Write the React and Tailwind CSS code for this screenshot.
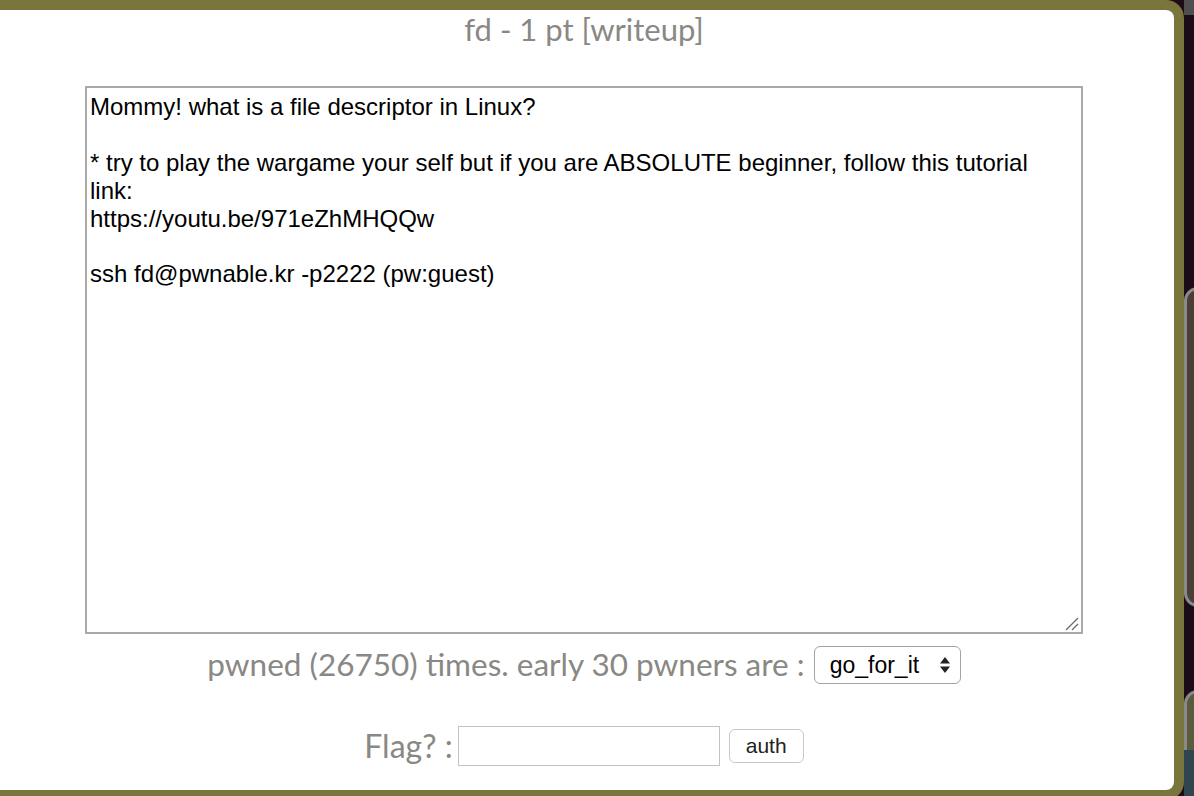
import React from "react";

const text = `Mommy! what is a file descriptor in Linux?

* try to play the wargame your self but if you are ABSOLUTE beginner, follow this tutorial
link:
https://youtu.be/971eZhMHQQw

ssh fd@pwnable.kr -p2222 (pw:guest)`;

export default function App() {
  return (
    <div className="flex h-[796px] w-[1194px] overflow-hidden bg-[#1b0c17]">
      <div className="h-[800px] w-[1184px] shrink-0 rounded-r-[18px] border-[10px] border-l-0 border-[#7a753c] bg-[#7a753c]">
        <div className="flex h-full flex-col items-center rounded-r-[8px] bg-white pr-[6px]">
          <h1 className="mt-[1px] text-[31px] leading-[1.2] text-[#8a8884]" style={{ fontFamily: "Lato, sans-serif" }}>
            fd - 1 pt [writeup]
          </h1>
          <div className="relative mt-[38px] h-[548px] w-[998px] border-2 border-[#a9a9a9]">
            <div
              className="h-full w-full overflow-hidden whitespace-pre-wrap px-[3px] pb-[2px] pt-[5px] text-[24px] leading-[1.16] text-black"
              style={{ fontFamily: "'Liberation Sans', Arial, sans-serif" }}
            >
              {text}
            </div>
            <svg className="absolute bottom-[1px] right-[2px]" width="16" height="16" viewBox="0 0 16 16">
              <path d="M3 15 L15 3" stroke="#6b6b6b" strokeWidth="1.3" />
              <path d="M9 15 L15 9" stroke="#6b6b6b" strokeWidth="1.3" />
            </svg>
          </div>
          <div className="mt-[12px] flex items-center gap-[9px]">
            <span className="text-[31.5px] leading-[1.2] text-[#8a8884]" style={{ fontFamily: "Lato, sans-serif" }}>
              pwned (26750) times. early 30 pwners are :
            </span>
            <div
              className="flex h-[38px] w-[147px] items-center justify-between rounded-[6px] border border-[#a3a3a3] bg-white pl-[15px] pr-[9px] text-[23px] text-black"
              style={{ fontFamily: "'Liberation Sans', Arial, sans-serif" }}
            >
              <span>go_for_it</span>
              <svg width="12" height="20" viewBox="0 0 12 20">
                <path d="M6 2 L11 8.5 L1 8.5 Z" fill="#222" />
                <path d="M6 18 L11 11.5 L1 11.5 Z" fill="#222" />
              </svg>
            </div>
          </div>
          <div className="mt-[42px] flex items-center">
            <span className="text-[32px] leading-[1.2] text-[#8a8884]" style={{ fontFamily: "Lato, sans-serif" }}>
              Flag? :
            </span>
            <div className="ml-[5px] h-[40px] w-[262px] border border-[#c2c2c2] bg-white" />
            <div
              className="ml-[9px] flex h-[34px] w-[75px] items-center justify-center rounded-[6px] border border-[#c8c8c8] bg-white text-[21px] text-[#222]"
              style={{ fontFamily: "'Liberation Sans', Arial, sans-serif" }}
            >
              auth
            </div>
          </div>
        </div>
      </div>
      <div className="flex flex-1 flex-col">
        <div className="h-[15px] bg-[#4e4e4e]" />
        <div className="h-[272px]" />
        <div className="h-[320px] w-[40px] rounded-l-[14px] border-[3px] border-[#8a8a8a] bg-[#4a3f36]" />
        <div className="h-[83px]" />
        <div className="h-[60px] w-[40px] rounded-tl-[14px] border-l-[3px] border-t-[3px] border-[#8a8a8a] bg-[#5a5a3e]" />
        <div className="flex-1 bg-[#2f4550]" />
      </div>
    </div>
  );
}
